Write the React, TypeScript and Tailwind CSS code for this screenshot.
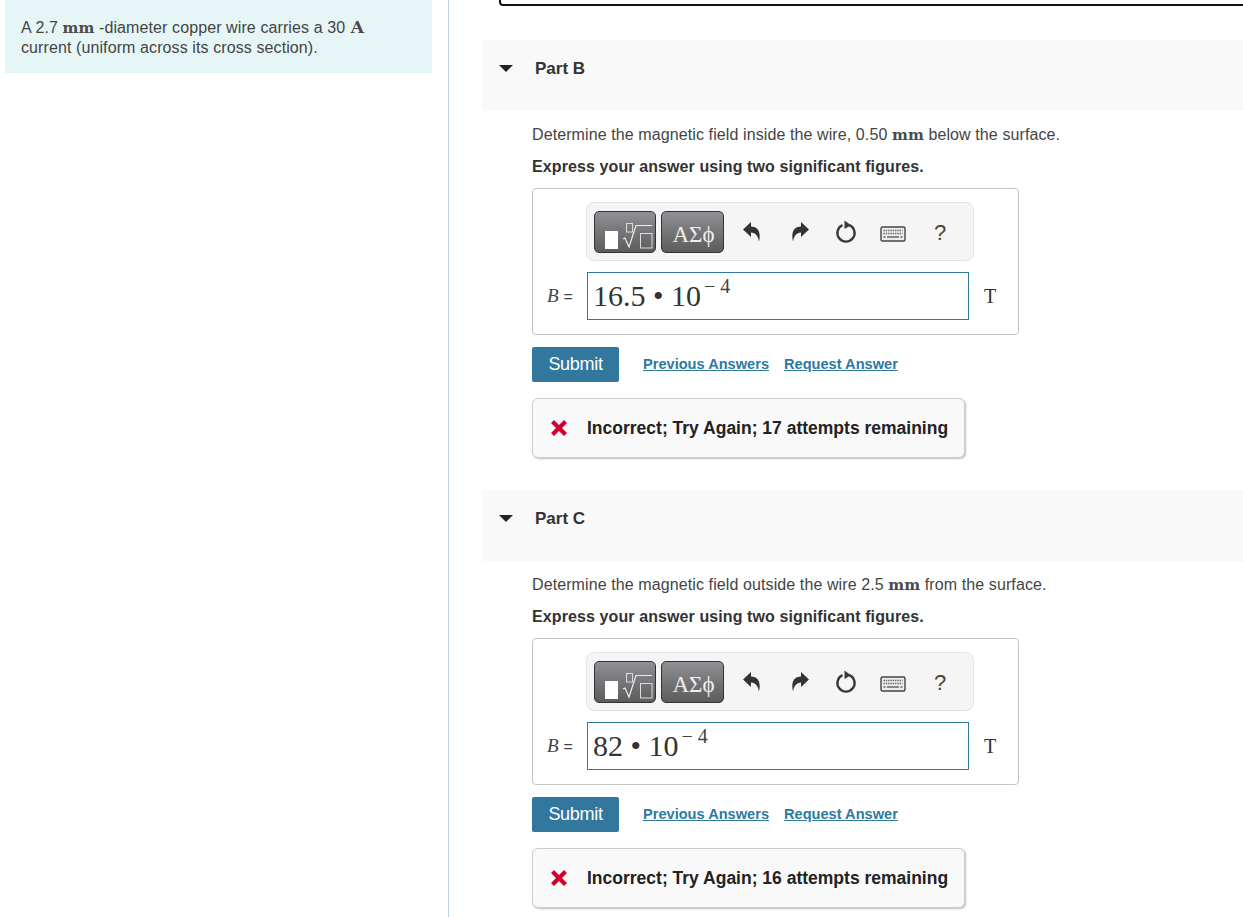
import React from 'react';

const sans = 'font-["Liberation_Sans",Arial,sans-serif]';
const serif = 'font-["Liberation_Serif","Times_New_Roman",serif]';

const MathUnit: React.FC<{ children: React.ReactNode }> = ({ children }) => (
    <span className='font-["DejaVu_Serif",serif] font-bold text-[15px] text-[#4a4a4a]'>{children}</span>
);

const TemplatesIcon = () => (
    <svg width="60" height="40" viewBox="0 0 60 40" fill="none">
        <rect x="10" y="19" width="13" height="18" fill="#fff" />
        <rect x="31.5" y="11.5" width="6" height="8.5" stroke="#ddd" strokeWidth="1" />
        <path d="M28 27l2 -1l4 9l7 -21.5h16" stroke="#eee" strokeWidth="1.2" />
        <rect x="45.5" y="21.5" width="11.5" height="14.5" stroke="#ddd" strokeWidth="1" />
    </svg>
);

const UndoIcon = () => (
    <svg width="18" height="20" viewBox="0 0 18 20" fill="#333">
        <path d="M0 7.5L8 0V4.5C14 4.5 18.5 9 16 19.5C15 14 12.5 10.5 8 10.5V15Z" />
    </svg>
);

const RedoIcon = () => (
    <svg width="18" height="20" viewBox="0 0 18 20" fill="#333">
        <path d="M18 7.5L10 0V4.5C4 4.5 -0.5 9 2 19.5C3 14 5.5 10.5 10 10.5V15Z" />
    </svg>
);

const ResetIcon = () => (
    <svg width="22" height="24" viewBox="0 0 22 24" fill="none">
        <path d="M7.5 5.2A8.6 8.6 0 1 0 14.5 5.2" stroke="#3a3a3a" strokeWidth="2.4" />
        <path d="M9.5 0.5L16 5.2L9.5 9Z" fill="#3a3a3a" />
    </svg>
);

const KeyboardIcon = () => (
    <svg width="26" height="16" viewBox="0 0 26 16" fill="none">
        <rect x="1" y="1" width="24" height="14" rx="1.5" fill="#ececec" stroke="#444" strokeWidth="1.4" />
        <path d="M3.5 4.5h19M3.5 7.5h19" stroke="#666" strokeWidth="1.6" strokeDasharray="1.4 0.9" />
        <path d="M3.5 11h2M7 11h12M20.5 11h2" stroke="#666" strokeWidth="1.6" />
    </svg>
);

const Toolbar = () => (
    <div className="ml-[53px] w-[388px] h-[59px] bg-[#f5f5f5] border border-[#e3e3e3] rounded-[8px] flex items-center pl-[7px]">
        <div className="w-[62px] h-[42px] rounded-[5px] border border-[#333] bg-gradient-to-b from-[#909096] to-[#5c5c5c] overflow-hidden">
            <TemplatesIcon />
        </div>
        <div className={`ml-[5px] w-[63px] h-[42px] rounded-[5px] border border-[#333] bg-gradient-to-b from-[#909096] to-[#5c5c5c] flex items-center justify-center text-[#eee] text-[23px] pl-[2px] pt-[7px] ${serif}`}>
            ΑΣϕ
        </div>
        <div className="ml-[19px]"><UndoIcon /></div>
        <div className="ml-[30px]"><RedoIcon /></div>
        <div className="ml-[26px] mt-[1px]"><ResetIcon /></div>
        <div className="ml-[23px] mt-[4px]"><KeyboardIcon /></div>
        <span className={`ml-[28px] mt-[2px] text-[#444] text-[22px] ${sans}`}>?</span>
    </div>
);

const Answer: React.FC<{ base: string }> = ({ base }) => (
    <div className="flex items-center mt-[11px] h-[48px]">
        <span className={`w-[54px] pl-[14px] text-[#444] text-[16px] whitespace-nowrap ${serif}`}>
            <i className="text-[19px]">B</i><span className={`${sans} ml-[5px] text-[16px]`}>=</span>
        </span>
        <div className={`w-[382px] h-[48px] border border-[#2f7a9e] flex items-start pl-[5px] pt-[4px] text-[#333] text-[30px] leading-[38px] whitespace-nowrap ${serif}`}>
            {base} • 10
            <span className="ml-[3px] mt-[-4px] text-[20px] leading-[26px] text-[#444]">− 4</span>
        </div>
        <span className={`ml-[15px] text-[#333] text-[20px] ${serif}`}>T</span>
    </div>
);

const Part: React.FC<{ label: string; question: React.ReactNode; base: string; attempts: number }> = ({ label, question, base, attempts }) => (
    <section className="h-[450px]">
        <header className="h-[71px] bg-[#f9f9f9] flex items-start pt-[19px]">
            <span className="ml-[17px] mt-[6px] w-0 h-0 border-x-[7px] border-x-transparent border-t-[7px] border-t-[#222]" />
            <h2 className="ml-[22px] text-[17px] leading-[20px] font-bold text-[#333]">{label}</h2>
        </header>
        <div className="pl-[50px]">
            <p className="mt-[14px] text-[16px] leading-[20px] tracking-[0.1px] text-[#444] whitespace-nowrap">{question}</p>
            <p className="mt-[12px] text-[16px] leading-[20px] tracking-[0.1px] font-bold text-[#333]">Express your answer using two significant figures.</p>
            <div className="mt-[11px] w-[487px] h-[147px] border border-[#c4c4c4] rounded-[4px] pt-[13px]">
                <Toolbar />
                <Answer base={base} />
            </div>
            <div className="mt-[12px] flex items-center h-[35px]">
                <button className="w-[87px] h-[35px] bg-[#32789e] rounded-[2px] text-white text-[18px] tracking-[-0.3px]">Submit</button>
                <a className="ml-[24px] text-[#2d7a9e] text-[14.6px] font-bold underline">Previous Answers</a>
                <a className="ml-[15px] text-[#2d7a9e] text-[14.6px] font-bold underline">Request Answer</a>
            </div>
            <div className="mt-[16px] w-[433px] h-[60px] bg-[#f9f9f9] border border-[#ccc] rounded-[6px] shadow-[1px_1px_2px_rgba(0,0,0,0.25)] flex items-center pl-[17px]">
                <svg width="18" height="18" viewBox="0 0 18 18"><path d="M1 4L4 1L9 6L14 1L17 4L12 9L17 14L14 17L9 12L4 17L1 14L6 9Z" fill="#d3002d" /></svg>
                <span className="ml-[19px] text-[17.5px] font-bold text-[#222] whitespace-nowrap">Incorrect; Try Again; {attempts} attempts remaining</span>
            </div>
        </div>
    </section>
);

export default function App() {
    return (
        <div className={`flex h-[917px] overflow-hidden bg-white ${sans}`}>
            <aside className="w-[449px] shrink-0 border-r border-[#c3d0e6] pl-[5px]">
                <div className="w-[427px] h-[73px] bg-[#e6f6f6] pl-[16px] pt-[18px] text-[16px] leading-[20px] tracking-[0.1px] text-[#444]">
                    A 2.7 <MathUnit>mm</MathUnit> -diameter copper wire carries a 30 <span className='ml-[1px] font-["DejaVu_Serif",serif] font-bold text-[17px] leading-[16px] text-[#4a4a4a]'>A</span><br />
                    current (uniform across its cross section).
                </div>
            </aside>
            <main className="flex-1 min-w-0 pl-[33px]">
                <div className="h-[40px] overflow-hidden">
                    <div className="ml-[17px] mr-[-20px] mt-[-20px] h-[26px] border-2 border-[#111] rounded-[4px]" />
                </div>
                <Part label="Part B" base="16.5" attempts={17} question={<>Determine the magnetic field inside the wire, 0.50 <MathUnit>mm</MathUnit> below the surface.</>} />
                <Part label="Part C" base="82" attempts={16} question={<>Determine the magnetic field outside the wire 2.5 <MathUnit>mm</MathUnit> from the surface.</>} />
            </main>
        </div>
    );
}
